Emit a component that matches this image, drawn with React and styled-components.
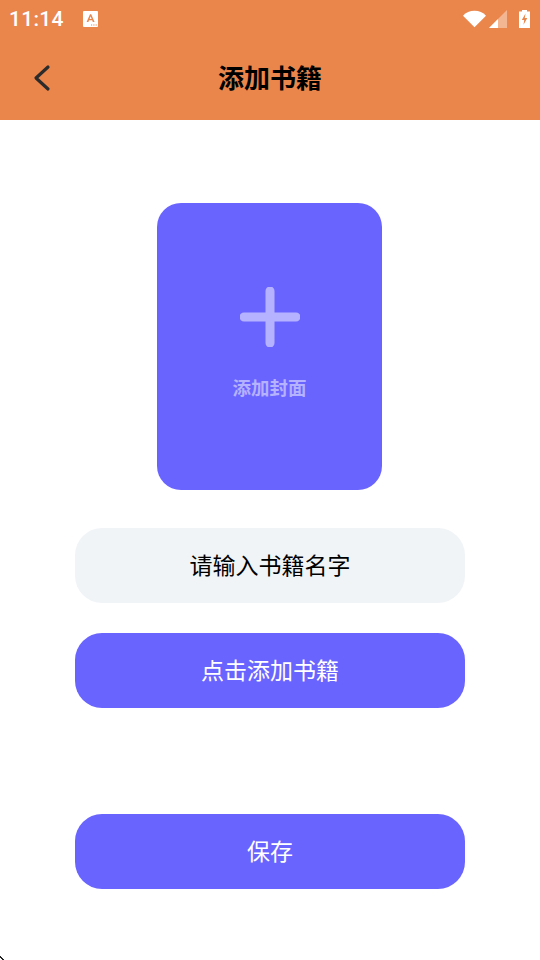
import styled, { createGlobalStyle } from "styled-components";

const GlobalStyle = createGlobalStyle`
  html, body {
    margin: 0;
    padding: 0;
    background: #fff;
  }
  * {
    box-sizing: border-box;
  }
`;

const Page = styled.div`
  position: relative;
  width: 540px;
  height: 960px;
  overflow: hidden;
  background: #fff;
  display: flex;
  flex-direction: column;
  font-family: "Noto Sans CJK SC", "Noto Sans", sans-serif;
`;

const TopArea = styled.header`
  height: 120px;
  background: #ea864c;
  display: flex;
  flex-direction: column;
`;

const StatusBar = styled.div`
  height: 38px;
  padding: 0 10px 0 9px;
  display: flex;
  align-items: center;
  color: #fff;
`;

const Clock = styled.span`
  font-family: Roboto, sans-serif;
  font-size: 21px;
  font-weight: 500;
  letter-spacing: 0.3px;
  width: 74px;
`;

const StatusIcons = styled.div`
  margin-left: auto;
  display: flex;
  align-items: center;
`;

const NavBar = styled.div`
  flex: 1;
  position: relative;
  display: flex;
  align-items: center;
  justify-content: center;
`;

const BackButton = styled.div`
  position: absolute;
  left: 32px;
  top: 26px;
  width: 20px;
  height: 28px;
`;

const Title = styled.h1`
  margin: 0;
  font-size: 26px;
  font-weight: 700;
  line-height: 36px;
  color: #000;
  position: relative;
  top: -2px;
`;

const Content = styled.main`
  display: flex;
  flex-direction: column;
  align-items: center;
  padding-top: 83px;
`;

const Cover = styled.div`
  width: 225px;
  height: 287px;
  margin-right: 1px;
  border-radius: 24px;
  background: #6a64ff;
  display: flex;
  flex-direction: column;
  align-items: center;
  padding-top: 84px;
`;

const CoverLabel = styled.span`
  margin-top: 27px;
  font-size: 18.5px;
  font-weight: 700;
  line-height: 26px;
  color: #b5b2ff;
`;

const Pill = styled.div`
  width: 390px;
  height: 75px;
  padding-bottom: 4px;
  border-radius: 27px;
  display: flex;
  align-items: center;
  justify-content: center;
  font-size: 23px;
  margin-top: ${(p) => p.$top}px;
  background: ${(p) => (p.$muted ? "#f1f4f7" : "#6a64ff")};
  color: ${(p) => (p.$muted ? "#000" : "#fff")};
`;

const Speck = styled.svg`
  position: absolute;
  left: 0;
  bottom: 0;
`;

const WifiGap = styled.span`
  width: ${(p) => p.$size}px;
`;

function NotifyIcon() {
  return (
    <svg width="15" height="16" viewBox="0 0 15 16" style={{ display: "block" }}>
      <rect width="15" height="16" rx="1" fill="#fff" />
      <path d="M3.6 11 7 3.2h1.2L11.6 11H9.8l-.6-1.7H6l-.6 1.7zM6.6 7.9h2L7.6 5.2z" fill="#ea864c" />
      <path d="M8 14h1.2M10.3 14h1.2M12.6 14h1.2" stroke="#ea864c" strokeWidth="1" />
    </svg>
  );
}

function WifiIcon() {
  return (
    <svg width="23" height="18" viewBox="0 0 24 18" style={{ display: "block" }}>
      <path d="M0 5.5C3 2.4 7.2.5 12 .5s9 1.9 12 5L12 17.5z" fill="#fff" />
    </svg>
  );
}

function SignalIcon() {
  return (
    <svg width="18" height="18" viewBox="0 0 18 18" style={{ display: "block" }}>
      <path d="M18 0v18H0z" fill="#fff" fillOpacity="0.4" />
      <path d="M9 9v9H0z" fill="#fff" />
    </svg>
  );
}

function BatteryIcon() {
  return (
    <svg width="11" height="18" viewBox="0 0 11 18" style={{ display: "block" }}>
      <path d="M3 0h5v1.5h3V18H0V1.5h3z" fill="#fff" />
      <path d="M6.5 3.5 2.8 10h2.4l-.7 4.8L8.3 8H5.8z" fill="#ea864c" />
    </svg>
  );
}

export default function App() {
  return (
    <Page>
      <GlobalStyle />
      <TopArea>
        <StatusBar>
          <Clock>11:14</Clock>
          <NotifyIcon />
          <StatusIcons>
            <WifiIcon />
            <WifiGap $size={3} />
            <SignalIcon />
            <WifiGap $size={12} />
            <BatteryIcon />
          </StatusIcons>
        </StatusBar>
        <NavBar>
          <BackButton>
            <svg width="20" height="28" viewBox="0 0 20 28">
              <path d="M16 3 4 14l12 11" fill="none" stroke="#2b2b2b" strokeWidth="3.2" strokeLinecap="round" strokeLinejoin="round" />
            </svg>
          </BackButton>
          <Title>添加书籍</Title>
        </NavBar>
      </TopArea>
      <Content>
        <Cover>
          <svg width="60" height="60" viewBox="0 0 60 60">
            <path d="M30 4v52M4 30h52" stroke="#b5b2ff" strokeWidth="9" strokeLinecap="round" />
          </svg>
          <CoverLabel>添加封面</CoverLabel>
        </Cover>
        <Pill $muted $top={38}>请输入书籍名字</Pill>
        <Pill $top={30}>点击添加书籍</Pill>
        <Pill $top={106}>保存</Pill>
      </Content>
      <Speck width="5" height="4" viewBox="0 0 5 4">
        <path d="M0 0h1v1h1v1h1v1h1v1H2V3H1V2H0z" fill="#222" />
      </Speck>
    </Page>
  );
}
